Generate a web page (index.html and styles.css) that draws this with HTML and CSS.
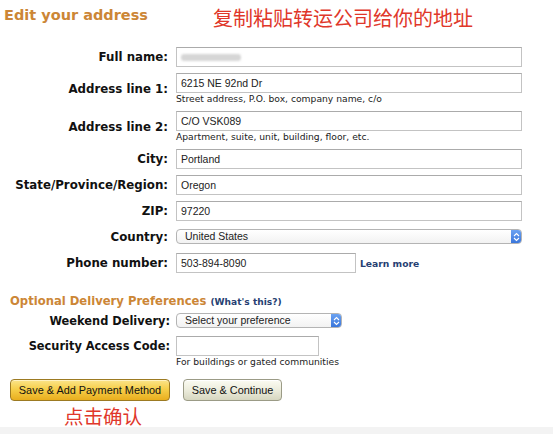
FILE: index.html
```html
<!DOCTYPE html>
<html>
<head>
<meta charset="utf-8">
<link rel="stylesheet" href="styles.css">
</head>
<body>
<div class="page">
  <div class="header">
    <h1 class="title">Edit your address</h1>
    <div class="note note-top">复制粘贴转运公司给你的地址</div>
  </div>

  <div class="form">
    <div class="label">Full name:</div>
    <div class="field"><div class="input wide"><span class="blur"></span></div></div>

    <div class="label">Address line 1:</div>
    <div class="field"><div class="input wide">6215 NE 92nd Dr</div><div class="help">Street address, P.O. box, company name, c/o</div></div>

    <div class="label">Address line 2:</div>
    <div class="field"><div class="input wide">C/O VSK089</div><div class="help">Apartment, suite, unit, building, floor, etc.</div></div>

    <div class="label">City:</div>
    <div class="field"><div class="input wide">Portland</div></div>

    <div class="label">State/Province/Region:</div>
    <div class="field"><div class="input wide">Oregon</div></div>

    <div class="label">ZIP:</div>
    <div class="field"><div class="input wide">97220</div></div>

    <div class="label">Country:</div>
    <div class="field"><div class="select wide"><span>United States</span><span class="stepper"><svg width="7" height="10" viewBox="0 0 7 10"><path d="M1 4 L3.5 1.5 L6 4 M1 6 L3.5 8.5 L6 6" fill="none" stroke="#fff" stroke-width="1.1"/></svg></span></div></div>

    <div class="label">Phone number:</div>
    <div class="field row"><div class="input phone">503-894-8090</div><a class="link learn">Learn more</a></div>
  </div>

  <h2 class="subtitle">Optional Delivery Preferences <a class="link small">(What's this?)</a></h2>

  <div class="form form2">
    <div class="label">Weekend Delivery:</div>
    <div class="field"><div class="select pref"><span>Select your preference</span><span class="stepper"><svg width="7" height="10" viewBox="0 0 7 10"><path d="M1 4 L3.5 1.5 L6 4 M1 6 L3.5 8.5 L6 6" fill="none" stroke="#fff" stroke-width="1.1"/></svg></span></div></div>

    <div class="label label-top">Security Access Code:</div>
    <div class="field"><div class="input code"></div><div class="help">For buildings or gated communities</div></div>
  </div>

  <div class="buttons">
    <button class="btn btn-primary">Save &amp; Add Payment Method</button>
    <button class="btn btn-secondary">Save &amp; Continue</button>
  </div>
  <div class="note note-bottom">点击确认</div>
</div>
<div class="footer-strip"></div>
</body>
</html>
```

FILE: styles.css
```css
html, body {
  margin: 0;
  padding: 0;
  background: #fff;
}
body {
  width: 553px;
  height: 434px;
  overflow: hidden;
  position: relative;
  font-family: "DejaVu Sans", Verdana, sans-serif;
  color: #111;
}
.page {
  height: 427px;
}
.header {
  display: flex;
  align-items: flex-start;
  height: 47px;
}
.title {
  margin: 6px 0 0 4px;
  font-size: 14.5px;
  font-weight: bold;
  color: #cc8636;
  line-height: 18px;
  width: 209px;
}
.note {
  font-family: "Noto Sans CJK SC", sans-serif;
  color: #e0372a;
  font-weight: 400;
}
.note-top {
  font-size: 20px;
  line-height: 24px;
  margin-top: 6px;
}
.form {
  display: grid;
  grid-template-columns: 168px 346px;
  column-gap: 8px;
  row-gap: 6px;
}
.label {
  text-align: right;
  font-weight: bold;
  font-size: 11.8px;
  align-self: center;
  color: #111;
  white-space: nowrap;
}
.label-top {
  align-self: start;
  line-height: 20px;
}
.field {
  display: flex;
  flex-direction: column;
}
.field.row {
  flex-direction: row;
  align-items: center;
}
.input {
  box-sizing: border-box;
  height: 20px;
  border: 1px solid #c3c3c3;
  border-top-color: #ababab;
  background: #fff;
  font-family: "Liberation Sans", Arial, sans-serif;
  font-size: 10.5px;
  color: #222;
  line-height: 18px;
  padding: 0 4px;
}
.wide { width: 346px; }
.phone { width: 180px; }
.code { width: 143px; }
.blur {
  display: inline-block;
  width: 60px;
  height: 7px;
  background: #d6d6d6;
  border-radius: 3px;
  filter: blur(1px);
  vertical-align: middle;
  margin-top: -2px;
}
.help {
  font-size: 9.2px;
  line-height: 12px;
  color: #222;
  white-space: nowrap;
}
.select {
  box-sizing: border-box;
  height: 15px;
  margin: 2px 0 3px;
  border: 1px solid #b4b4b4;
  border-radius: 4px;
  background: linear-gradient(#fff, #f2f2f2);
  font-family: "Liberation Sans", Arial, sans-serif;
  font-size: 10.5px;
  line-height: 13px;
  color: #222;
  padding-left: 8px;
  display: flex;
  justify-content: space-between;
  align-items: center;
  overflow: hidden;
}
.select.pref {
  width: 166px;
}
.stepper {
  width: 11px;
  height: 15px;
  margin-right: -1px;
  background: linear-gradient(#6fa6f4, #3672d9);
  border-radius: 0 4px 4px 0;
  display: flex;
  align-items: center;
  justify-content: center;
}
.link {
  color: #273f72;
  font-weight: bold;
  text-decoration: none;
}
.learn {
  font-size: 9.2px;
  margin-left: 4px;
}
.subtitle {
  margin: 20px 0 0 10px;
  font-size: 11.6px;
  line-height: 16px;
  font-weight: bold;
  color: #cc8636;
  height: 18px;
}
.subtitle .small {
  font-size: 9.1px;
}
.form2 {
  grid-template-columns: 170px 346px;
  column-gap: 6px;
  row-gap: 5px;
}
.form2 .label {
  font-size: 11.4px;
}
.buttons {
  display: flex;
  gap: 13px;
  margin: 11px 0 0 10px;
}
.btn {
  box-sizing: border-box;
  height: 22px;
  font-family: "Liberation Sans", Arial, sans-serif;
  font-size: 10.9px;
  color: #111;
  border-radius: 4px;
  padding: 0;
}
.btn-primary {
  width: 160px;
  border: 1px solid #9c7a22;
  background: linear-gradient(#fbe48a 0%, #f6cf4a 45%, #e9ae1e 100%);
  box-shadow: inset 0 1px 0 #fff2c0;
}
.btn-secondary {
  width: 99px;
  border: 1px solid #9b9b86;
  background: linear-gradient(#fbfbf2 0%, #ececdc 50%, #d6d6c0 100%);
  box-shadow: inset 0 1px 0 #fff;
}
.note-bottom {
  font-size: 19.5px;
  line-height: 24px;
  margin: 3px 0 0 64px;
}
.footer-strip {
  position: absolute;
  left: 0;
  right: 0;
  bottom: 0;
  height: 7px;
  background: #f3f3f3;
}
```
